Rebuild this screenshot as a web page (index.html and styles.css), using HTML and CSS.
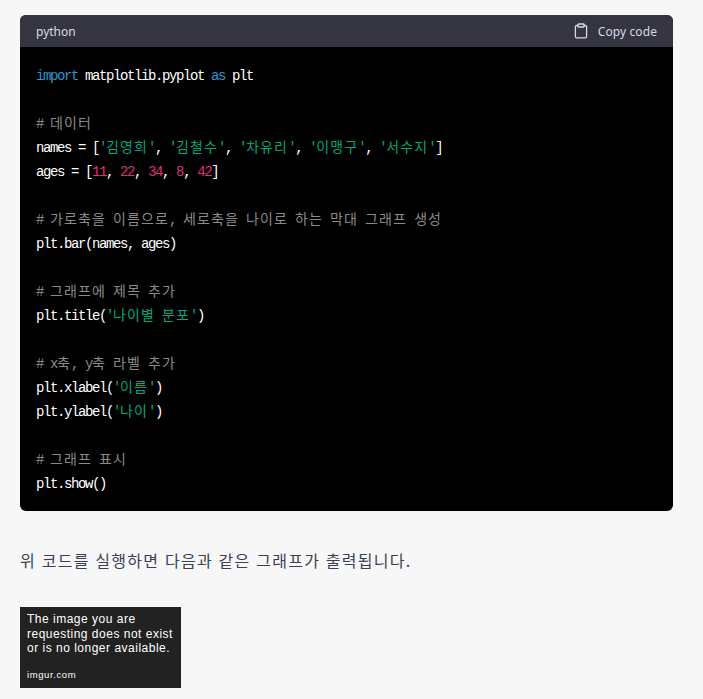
FILE: index.html
```html
<!DOCTYPE html>
<html lang="ko">
<head>
<meta charset="utf-8">
<title>python</title>
<link rel="stylesheet" href="styles.css">
</head>
<body>
<main class="page">
<section class="codebox">
<header class="codehead">
<span class="lang">python</span>
<button class="copy">
<svg class="copy-icon" viewBox="0 0 14 16" width="14" height="16" fill="none" stroke="currentColor" stroke-width="1.3"><path d="M4 2.5H2.6A1.2 1.2 0 0 0 1.4 3.7v9.9a1.2 1.2 0 0 0 1.2 1.2h8.8a1.2 1.2 0 0 0 1.2-1.2V3.7a1.2 1.2 0 0 0-1.2-1.2H10"/><rect x="4" y="1" width="6" height="3" rx=".6"/></svg>
<span class="copy-label">Copy code</span>
</button>
</header>
<div class="code">
<div class="line"><span class="kw">import</span> matplotlib.pyplot <span class="kw">as</span> plt</div>
<div class="line"></div>
<div class="line"><span class="cm"># <i>데이터</i></span></div>
<div class="line">names = [<span class="st">'<i>김영희</i>'</span>, <span class="st">'<i>김철수</i>'</span>, <span class="st">'<i>차유리</i>'</span>, <span class="st">'<i>이맹구</i>'</span>, <span class="st">'<i>서수지</i>'</span>]</div>
<div class="line">ages = [<span class="nu">11</span>, <span class="nu">22</span>, <span class="nu">34</span>, <span class="nu">8</span>, <span class="nu">42</span>]</div>
<div class="line"></div>
<div class="line"><span class="cm"># <i>가로축을</i> <i>이름으로</i>, <i>세로축을</i> <i>나이로</i> <i>하는</i> <i>막대</i> <i>그래프</i> <i>생성</i></span></div>
<div class="line">plt.bar(names, ages)</div>
<div class="line"></div>
<div class="line"><span class="cm"># <i>그래프에</i> <i>제목</i> <i>추가</i></span></div>
<div class="line">plt.title(<span class="st">'<i>나이별</i> <i>분포</i>'</span>)</div>
<div class="line"></div>
<div class="line"><span class="cm"># x<i>축</i>, y<i>축</i> <i>라벨</i> <i>추가</i></span></div>
<div class="line">plt.xlabel(<span class="st">'<i>이름</i>'</span>)</div>
<div class="line">plt.ylabel(<span class="st">'<i>나이</i>'</span>)</div>
<div class="line"></div>
<div class="line"><span class="cm"># <i>그래프</i> <i>표시</i></span></div>
<div class="line">plt.show()</div>
</div>
</section>
<p class="lead">위 코드를 실행하면 다음과 같은 그래프가 출력됩니다.</p>
<figure class="missing">
<p class="missing-text">The image you are<br>requesting does not exist<br>or is no longer available.</p>
<p class="missing-site">imgur.com</p>
</figure>
</main>
</body>
</html>
```
FILE: styles.css
```css
* { box-sizing: border-box; }
html, body { margin: 0; padding: 0; }
body {
  background: #f7f7f8;
  height: 699px;
  overflow: hidden;
  font-family: "Noto Sans CJK KR", "Liberation Sans", sans-serif;
}
.page { padding: 15px 30px 0 20px; }
.codebox {
  background: #000;
  border-radius: 6px;
  overflow: hidden;
}
.codehead {
  height: 32px;
  background: #343541;
  color: #d9d9e3;
  display: flex;
  align-items: center;
  justify-content: space-between;
  padding: 0 16px;
  font-family: "Noto Sans", "Liberation Sans", sans-serif;
  font-size: 12px;
}
.copy {
  display: flex;
  align-items: center;
  gap: 10px;
  padding: 0;
  border: 0;
  background: none;
  color: inherit;
  font: inherit;
}
.copy-label { letter-spacing: 0.1px; }
.code {
  padding: 17px 16px 15px;
  color: #fff;
  font-family: "Liberation Mono", monospace;
  font-size: 14px;
  line-height: 24px;
  letter-spacing: -1.4px;
}
.line {
  height: 24px;
  white-space: pre;
}
.code i {
  font-family: "Noto Sans CJK KR", sans-serif;
  font-style: normal;
  font-weight: 400;
  letter-spacing: 1.12px;
  font-size: 14px;
  line-height: 0;
}
.kw { color: #2e95d3; }
.cm { color: #8a8a8a; }
.st { color: #00a67d; }
.nu { color: #df3079; }
.lead {
  margin: 37px 0 0;
  color: #374151;
  font-size: 16px;
  line-height: 24px;
  letter-spacing: 1.25px;
}
.missing {
  margin: 35px 0 0;
  width: 161px;
  height: 81px;
  padding: 5px 7px;
  background: #222;
  color: #fff;
  font-family: "Liberation Sans", sans-serif;
}
.missing-text {
  margin: 0;
  font-size: 12px;
  line-height: 14.5px;
  letter-spacing: 0.5px;
  white-space: nowrap;
}
.missing-site {
  margin: 13px 0 0;
  font-size: 9.5px;
  font-weight: 400;
  line-height: 12px;
  letter-spacing: 0.6px;
}
```
